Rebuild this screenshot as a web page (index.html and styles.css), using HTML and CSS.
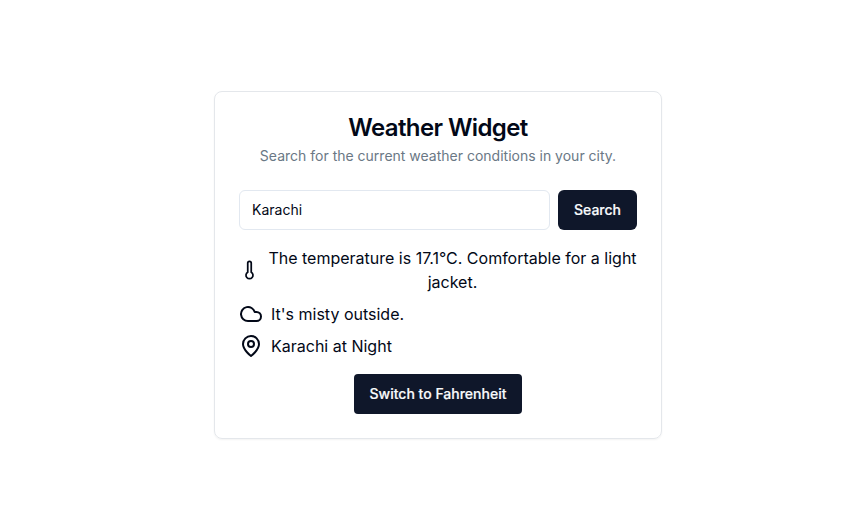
FILE: index.html
```html
<!DOCTYPE html>
<html lang="en">
<head>
<meta charset="utf-8">
<title>Weather Widget</title>
<link rel="stylesheet" href="styles.css">
</head>
<body>
<main class="page">
  <section class="card">
    <header class="card-header">
      <h1 class="title">Weather Widget</h1>
      <p class="description">Search for the current weather conditions in your city.</p>
    </header>
    <form class="search">
      <input class="input" type="text" value="Karachi" aria-label="City">
      <button class="button" type="button">Search</button>
    </form>
    <div class="results">
      <div class="row">
        <svg class="icon" viewBox="0 0 24 24"><path d="M14 4v10.54a4 4 0 1 1-4 0V4a2 2 0 0 1 4 0Z"/></svg>
        <span>The temperature is 17.1°C. Comfortable for a light jacket.</span>
      </div>
      <div class="row">
        <svg class="icon" viewBox="0 0 24 24"><path d="M17.5 19H9a7 7 0 1 1 6.71-9h1.79a4.5 4.5 0 1 1 0 9Z"/></svg>
        <span>It's misty outside.</span>
      </div>
      <div class="row">
        <svg class="icon" viewBox="0 0 24 24"><path d="M20 10c0 6-8 12-8 12s-8-6-8-12a8 8 0 0 1 16 0Z"/><circle cx="12" cy="10" r="3"/></svg>
        <span>Karachi at Night</span>
      </div>
      <button class="button switch" type="button">Switch to Fahrenheit</button>
    </div>
  </section>
</main>
</body>
</html>
```
FILE: styles.css
```css
* { box-sizing: border-box; }
body {
  margin: 0;
  background: #fff;
  color: #020817;
  font: 16px/24px Inter, sans-serif;
}
.page {
  display: flex;
  justify-content: center;
  height: 511px;
  padding: 91px 0 0 14px;
}
.card {
  width: 448px;
  height: 348px;
  padding: 24px;
  border: 1px solid #e4e7eb;
  border-radius: 8px;
  box-shadow: 0 1px 2px rgba(0, 0, 0, .05);
  text-align: center;
}
.title {
  margin: 0;
  font-size: 24px;
  line-height: 24px;
  font-weight: 600;
  letter-spacing: -0.6px;
}
.description {
  margin: 6px 0 0;
  color: #6a7885;
  font-size: 14px;
  line-height: 20px;
}
.search {
  display: flex;
  gap: 8px;
  margin: 24px 0 0;
}
.input {
  flex: 1;
  min-width: 0;
  height: 40px;
  padding: 7px 12px 9px;
  border: 1px solid #e2e8f0;
  border-radius: 6px;
  background: #fff;
  color: inherit;
  font: 14px/20px Inter, sans-serif;
}
.button {
  height: 40px;
  padding: 8px 16px;
  border: 0;
  border-radius: 6px;
  background: #0f172a;
  color: #f8fafc;
  font: 500 14px/20px Inter, sans-serif;
  -webkit-text-stroke: 0.2px currentColor;
}
.results {
  display: grid;
  gap: 8px;
  margin-top: 16px;
}
.row {
  display: flex;
  align-items: center;
  gap: 8px;
}
.icon {
  width: 24px;
  height: 24px;
  fill: none;
  stroke: currentColor;
  stroke-width: 2;
  stroke-linecap: round;
  stroke-linejoin: round;
}
.switch {
  justify-self: center;
  margin-top: 8px;
  border-radius: 4px;
}
```
